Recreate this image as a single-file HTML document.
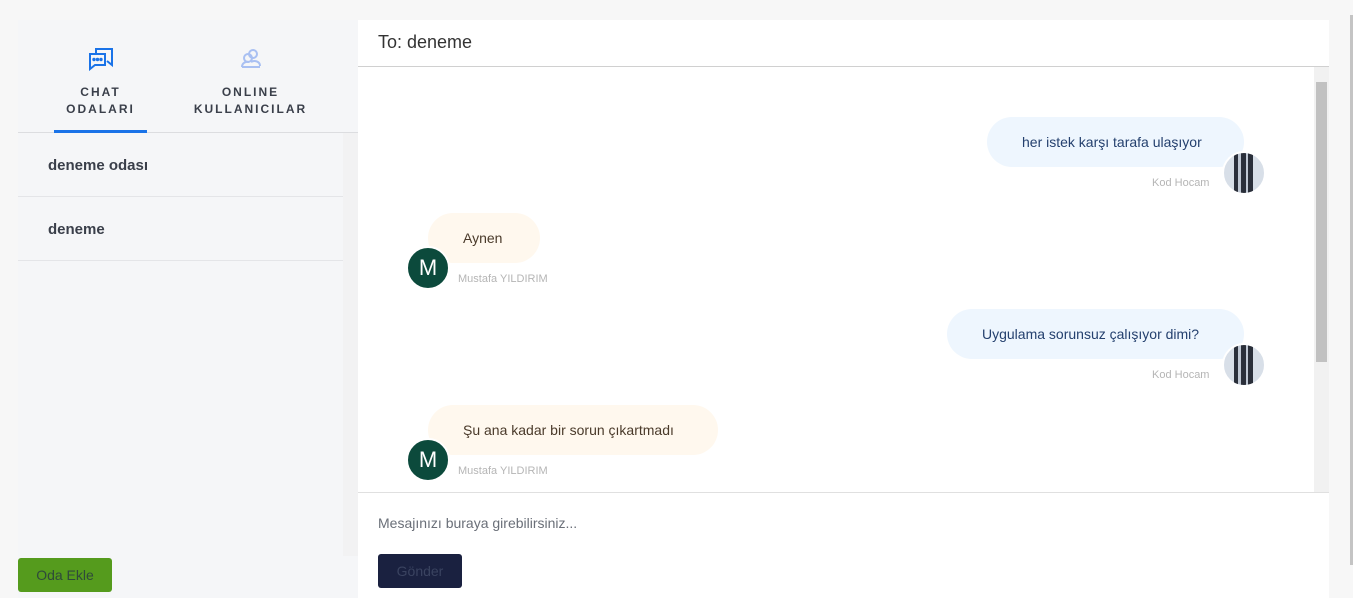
<!DOCTYPE html>
<html><head><meta charset="utf-8"><style>
*{box-sizing:border-box;margin:0;padding:0}
body{width:1353px;height:598px;background:#f7f7f7;font-family:"Liberation Sans",sans-serif;position:relative;overflow:hidden}
.side{position:absolute;left:18px;top:20px;width:340px;height:578px;background:#f5f6f8}
.tab{position:absolute;top:0;height:112px;text-align:center;font-size:12px;font-weight:bold;letter-spacing:2px;color:#3a3f4a;line-height:17px}
.tabs{position:absolute;left:0;top:0;width:340px;height:113px;border-bottom:1px solid #dcdde0}
.ul{position:absolute;left:36px;top:110px;width:93px;height:3px;background:#1a73e8}
.item{position:absolute;left:0;width:325px;height:64px;border-bottom:1px solid #e4e5e8;font-size:15px;font-weight:bold;color:#3a3f4a;padding:24px 30px}
.sb{position:absolute;left:325px;top:113px;width:15px;height:423px;background:#f2f2f3}
.btn1{position:absolute;left:0;top:538px;width:94px;height:34px;background:#559b1d;border-radius:3px;color:#2f4a3a;font-size:14px;text-align:center;line-height:34px}
.main{position:absolute;left:358px;top:20px;width:971px;height:578px;background:#fff}
.hdr{height:47px;border-bottom:1px solid #d0d0d0;font-size:18px;color:#333;padding:12px 20px}
.msb{position:absolute;left:956px;top:47px;width:15px;height:426px;background:#f1f1f1}
.thumb{position:absolute;left:2px;top:15px;width:11px;height:280px;background:#c1c1c1}
.bub{position:absolute;height:50px;border-radius:25px;font-size:14px;line-height:50px;padding:0 35px}
.r{background:#eef6fe;color:#24406e}
.l{background:#fff8ee;color:#4a3a2a}
.av{position:absolute;width:44px;height:44px;border-radius:50%;border:2px solid #fff}
.img{background:linear-gradient(90deg,#d8dfe8 0 25%,#2a2f3a 25% 35%,#c0c8d4 35% 42%,#2a2f3a 42% 55%,#c0c8d4 55% 60%,#2a2f3a 60% 72%,#d8dfe8 72%)}
.m{background:#0c4a3c;color:#fff;font-size:22px;text-align:center;line-height:40px}
.nm{position:absolute;font-size:11px;color:#b5b5b5}
.inp{position:absolute;left:0;top:472px;width:971px;border-top:1px solid #e0e0e0;height:106px}
.ph{position:absolute;left:20px;top:22px;font-size:14px;color:#6a6f78}
.btn2{position:absolute;left:20px;top:61px;width:84px;height:34px;background:#1a2140;border-radius:3px;color:#3a4360;font-size:14px;text-align:center;line-height:34px}
</style></head><body>
<div class="side">
 <div class="tabs">
  <div class="tab" style="left:36px;width:93px;">
   <svg style="margin-top:27px" width="26" height="24" viewBox="0 0 26 24" fill="none" stroke="#1a73e8" stroke-width="2"><path d="M8 7V2h16v16l-5-4"/><path d="M2 7h15v11H7l-5 4z"/><circle cx="6" cy="12.5" r=".7" fill="#1a73e8"/><circle cx="9.5" cy="12.5" r=".7" fill="#1a73e8"/><circle cx="13" cy="12.5" r=".7" fill="#1a73e8"/></svg>
   <div style="margin-top:8px">CHAT<br>ODALARI</div></div>
  <div class="tab" style="left:170px;width:125px;">
   <svg style="margin-top:27px" width="24" height="24" viewBox="0 0 24 24" fill="none" stroke="#a9c0f2" stroke-width="2"><circle cx="14" cy="7" r="4"/><circle cx="9" cy="11" r="4"/><path d="M3 20c0-4 4-6 7-5M12 15c3-2 9-1 9 4"/><path d="M3 20h18"/></svg>
   <div style="margin-top:8px">ONLINE<br>KULLANICILAR</div></div>
  <div class="ul"></div>
 </div>
 <div class="item" style="top:113px">deneme odası</div>
 <div class="item" style="top:177px">deneme</div>
 <div class="sb"></div>
 <div class="btn1">Oda Ekle</div>
</div>
<div class="main">
 <div class="hdr">To: deneme</div>
 <div class="msb"><div class="thumb"></div></div>
 <div class="bub r" style="left:629px;top:97px;width:257px">her istek karşı tarafa ulaşıyor</div>
 <div class="av img" style="left:864px;top:131px"></div>
 <div class="nm" style="left:794px;top:157px">Kod Hocam</div>
 <div class="bub l" style="left:70px;top:193px;width:112px">Aynen</div>
 <div class="av m" style="left:48px;top:226px">M</div>
 <div class="nm" style="left:100px;top:253px">Mustafa YILDIRIM</div>
 <div class="bub r" style="left:589px;top:289px;width:297px">Uygulama sorunsuz çalışıyor dimi?</div>
 <div class="av img" style="left:864px;top:323px"></div>
 <div class="nm" style="left:794px;top:349px">Kod Hocam</div>
 <div class="bub l" style="left:70px;top:385px;width:290px">Şu ana kadar bir sorun çıkartmadı</div>
 <div class="av m" style="left:48px;top:418px">M</div>
 <div class="nm" style="left:100px;top:445px">Mustafa YILDIRIM</div>
 <div class="inp"><div class="ph">Mesajınızı buraya girebilirsiniz...</div><div class="btn2">Gönder</div></div>
</div>
<div style="position:absolute;left:1350px;top:15px;width:3px;height:550px;background:#c4c4c4"></div>
</body></html>
